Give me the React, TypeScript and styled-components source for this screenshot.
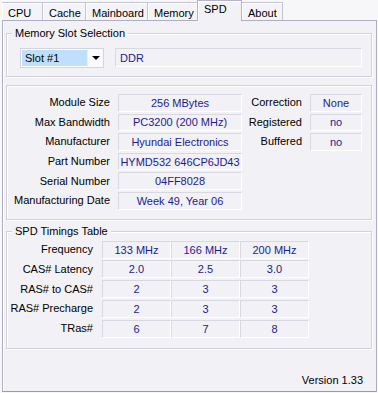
import { Fragment } from 'react'
import styled, { createGlobalStyle } from 'styled-components'

const GlobalStyle = createGlobalStyle`
  html, body {
    margin: 0;
    padding: 0;
    background: #f7f7fa;
  }
`

const PANEL_BG = '#f1f1f6'
const VALUE_COLOR = '#1c1c8e'

const Root = styled.div`
  width: 378px;
  height: 393px;
  display: flex;
  flex-direction: column;
  background: #f7f7fa;
  font-family: 'Liberation Sans', Arial, sans-serif;
  font-size: 11px;
  color: #000;
  overflow: hidden;
`

const TabBar = styled.div`
  display: flex;
  align-items: flex-end;
  height: 20px;
  padding-left: 2px;
  position: relative;
  z-index: 1;
`

const Tab = styled.div<{ width: number; selected?: boolean }>`
  box-sizing: border-box;
  width: ${({ width }) => width}px;
  height: 18px;
  padding: 4px 0 0 6px;
  line-height: 13px;
  background: #f4f4f8;
  border-top: 1px solid #c4c4d0;
  border-right: 1px solid #c4c4d0;
  box-shadow: inset 1px 1px 0 #fff;
  white-space: nowrap;

  ${({ selected }) =>
    selected &&
    `
    height: 21px;
    margin-bottom: -1px;
    padding-top: 2px;
    padding-left: 6px;
    background: ${PANEL_BG};
    border-left: 1px solid #b4b4c4;
    border-right: 1px solid #b4b4c4;
    border-top: 1px solid #b4b4c4;
    margin-left: -1px;
  `}
`

const Panel = styled.div`
  box-sizing: border-box;
  width: 375px;
  height: 372px;
  margin-left: 2px;
  background: ${PANEL_BG};
  border: 1px solid #aeaec2;
  border-bottom-color: #9a9ab2;
  box-shadow: inset 1px 0 0 #fff;
  display: flex;
  flex-direction: column;
  padding: 12px 4px 0 3px;
`

const Group = styled.div<{ gap: number }>`
  position: relative;
  margin-top: ${({ gap }) => gap}px;
  border: 1px solid #d2d2dc;
  box-shadow: inset 1px 1px 0 #fff, 1px 1px 0 #fff;
`

const GroupTitle = styled.span`
  position: absolute;
  top: -7px;
  left: 5px;
  padding: 0 3px;
  line-height: 13px;
  background: ${PANEL_BG};
`

const SlotRow = styled.div`
  display: flex;
  gap: 11px;
  padding: 14px 9px 8px 13px;
`

const Select = styled.div`
  box-sizing: border-box;
  width: 84px;
  height: 20px;
  display: flex;
  border: 1px solid #d4d4de;
  background: #fff;
`

const SelectValue = styled.div`
  flex: 1;
  margin: 1px 0 1px 1px;
  padding-left: 3px;
  line-height: 16px;
  background: #bfe0fb;
`

const SelectButton = styled.div`
  width: 15px;
  display: flex;
  align-items: center;
  justify-content: center;
  background: #fbfbfd;
  border-left: 1px solid #ececf2;
`

const Arrow = styled.span`
  width: 0;
  height: 0;
  border-left: 4px solid transparent;
  border-right: 4px solid transparent;
  border-top: 4px solid #000;
`

const Field = styled.div<{ align?: 'left' | 'center' }>`
  box-sizing: border-box;
  height: 100%;
  display: flex;
  align-items: center;
  justify-content: ${({ align }) => (align === 'left' ? 'flex-start' : 'center')};
  border: 1px solid;
  border-color: #d8d8e2 #fff #fff #d8d8e2;
  color: ${VALUE_COLOR};
  padding-left: ${({ align }) => (align === 'left' ? '4px' : '0')};
  white-space: nowrap;
  overflow: hidden;
`

const WideField = styled(Field)`
  flex: 1;
  height: 19px;
`

const InfoGrid = styled.div`
  display: grid;
  grid-template-columns: 103px 124px 52px 52px;
  grid-auto-rows: 17.6px;
  column-gap: 8px;
  row-gap: 2px;
  padding: 8px 0 9px 0;
`

const Label = styled.div`
  display: flex;
  align-items: center;
  justify-content: flex-end;
  white-space: nowrap;
  padding-bottom: 1px;
`

const TimingGrid = styled.div`
  display: grid;
  grid-template-columns: 95px 69px 69px 69px;
  grid-auto-rows: 18px;
  row-gap: 1.75px;
  padding: 9px 0 10px 0;
`

const TimingLabel = styled(Label)`
  padding-right: 9px;
`

const Footer = styled.div`
  flex: 1;
  display: flex;
  align-items: flex-end;
  justify-content: flex-end;
  padding: 0 9px 5px 0;
`

const TABS = [
  { name: 'CPU', width: 41 },
  { name: 'Cache', width: 43 },
  { name: 'Mainboard', width: 62 },
  { name: 'Memory', width: 50 },
  { name: 'SPD', width: 45, selected: true },
  { name: 'About', width: 41 },
]

type InfoRow = { label: string; value: string; sideLabel?: string; sideValue?: string }

const INFO: InfoRow[] = [
  { label: 'Module Size', value: '256 MBytes', sideLabel: 'Correction', sideValue: 'None' },
  { label: 'Max Bandwidth', value: 'PC3200 (200 MHz)', sideLabel: 'Registered', sideValue: 'no' },
  { label: 'Manufacturer', value: 'Hyundai Electronics', sideLabel: 'Buffered', sideValue: 'no' },
  { label: 'Part Number', value: 'HYMD532 646CP6JD43' },
  { label: 'Serial Number', value: '04FF8028' },
  { label: 'Manufacturing Date', value: 'Week 49, Year 06' },
]

const TIMINGS: { label: string; values: string[] }[] = [
  { label: 'Frequency', values: ['133 MHz', '166 MHz', '200 MHz'] },
  { label: 'CAS# Latency', values: ['2.0', '2.5', '3.0'] },
  { label: 'RAS# to CAS#', values: ['2', '3', '3'] },
  { label: 'RAS# Precharge', values: ['2', '3', '3'] },
  { label: 'TRas#', values: ['6', '7', '8'] },
]

export default function App() {
  return (
    <Root>
      <GlobalStyle />
      <TabBar>
        {TABS.map((tab) => (
          <Tab key={tab.name} width={tab.width} selected={tab.selected}>
            {tab.name}
          </Tab>
        ))}
      </TabBar>
      <Panel>
        <Group gap={0}>
          <GroupTitle>Memory Slot Selection</GroupTitle>
          <SlotRow>
            <Select>
              <SelectValue>Slot #1</SelectValue>
              <SelectButton>
                <Arrow />
              </SelectButton>
            </Select>
            <WideField align="left">DDR</WideField>
          </SlotRow>
        </Group>

        <Group gap={8}>
          <InfoGrid>
            {INFO.map((row) => (
              <Fragment key={row.label}>
                <Label>{row.label}</Label>
                <Field>{row.value}</Field>
                {row.sideLabel ? <Label>{row.sideLabel}</Label> : <span />}
                {row.sideValue ? <Field>{row.sideValue}</Field> : <span />}
              </Fragment>
            ))}
          </InfoGrid>
        </Group>

        <Group gap={11}>
          <GroupTitle>SPD Timings Table</GroupTitle>
          <TimingGrid>
            {TIMINGS.map((row) => (
              <Fragment key={row.label}>
                <TimingLabel>{row.label}</TimingLabel>
                {row.values.map((v, i) => (
                  <Field key={i}>{v}</Field>
                ))}
              </Fragment>
            ))}
          </TimingGrid>
        </Group>

        <Footer>Version 1.33</Footer>
      </Panel>
    </Root>
  )
}
